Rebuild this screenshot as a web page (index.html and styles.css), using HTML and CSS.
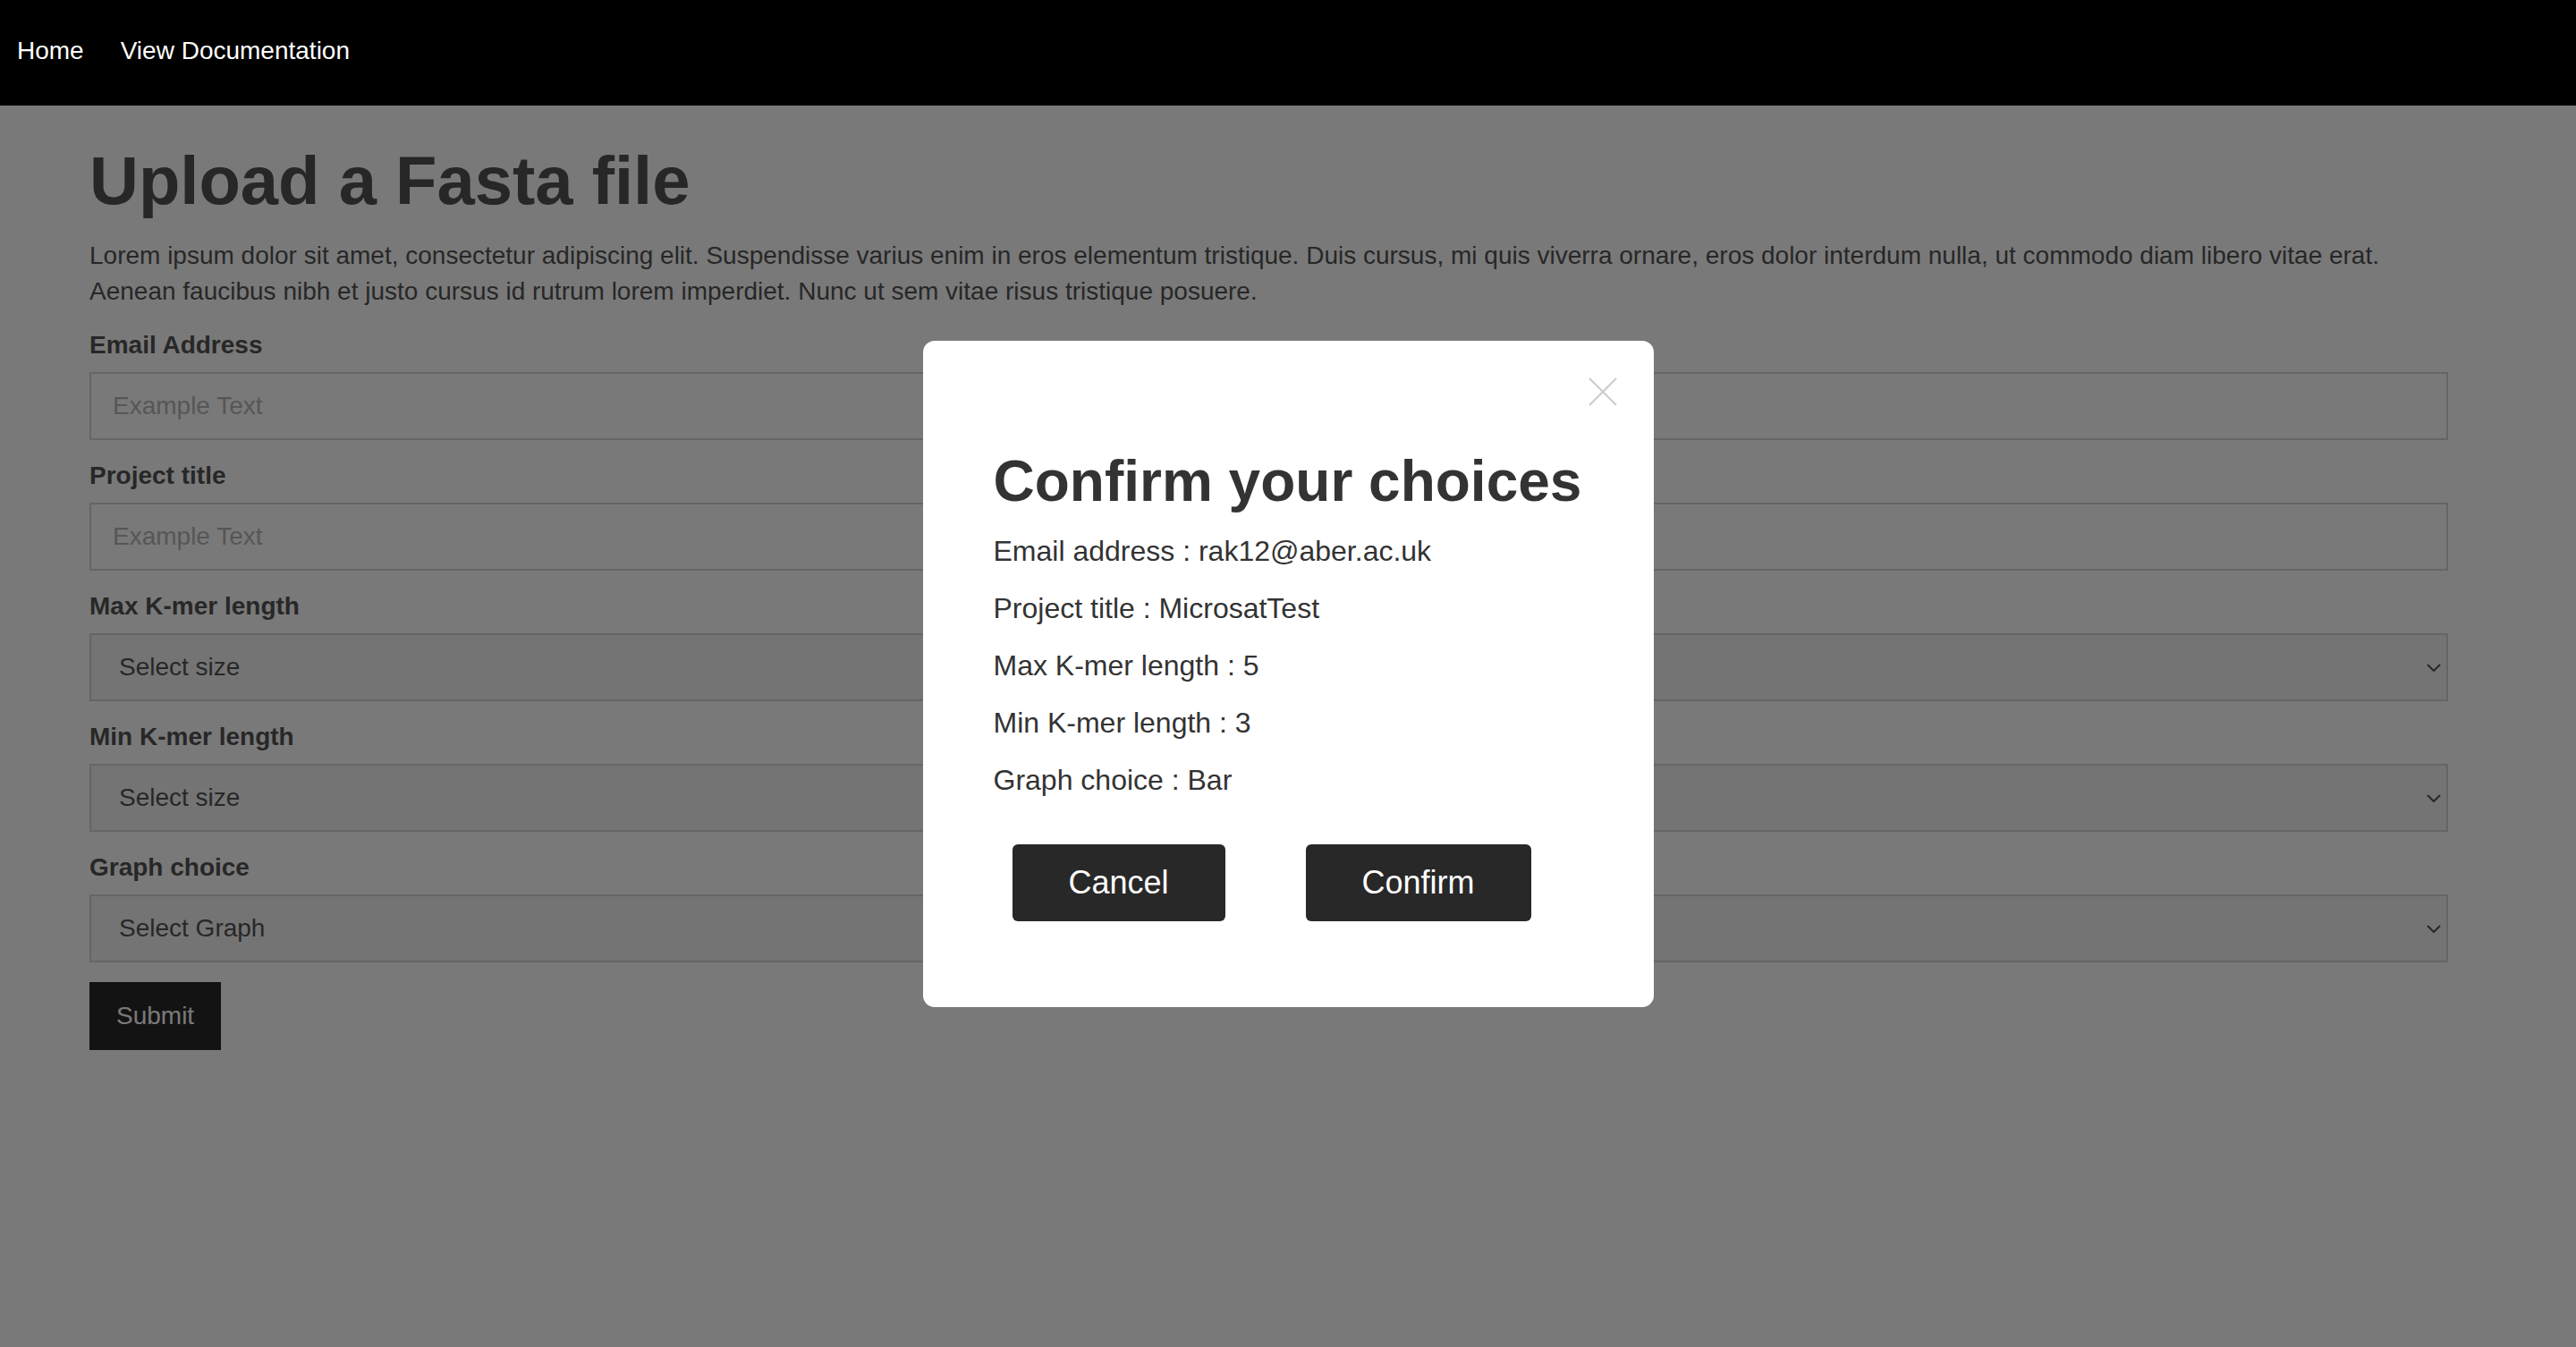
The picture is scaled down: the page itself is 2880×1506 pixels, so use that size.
FILE: index.html
```html
<!DOCTYPE html>
<html lang="en">
<head>
<meta charset="utf-8">
<title>Upload a Fasta file</title>
<link rel="stylesheet" href="styles.css">
</head>
<body>
<nav class="navbar">
  <a class="nav-link" href="#">Home</a>
  <a class="nav-link" href="#">View Documentation</a>
</nav>

<main class="page">
  <h1 class="page-title">Upload a Fasta file</h1>
  <p class="intro">Lorem ipsum dolor sit amet, consectetur adipiscing elit. Suspendisse varius enim in eros elementum tristique. Duis cursus, mi quis viverra ornare, eros dolor interdum nulla, ut commodo diam libero vitae erat. Aenean faucibus nibh et justo cursus id rutrum lorem imperdiet. Nunc ut sem vitae risus tristique posuere.</p>
  <form class="upload-form">
    <label class="field-label" for="email">Email Address</label>
    <input class="text-field" id="email" type="text" placeholder="Example Text">

    <label class="field-label" for="title">Project title</label>
    <input class="text-field" id="title" type="text" placeholder="Example Text">

    <label class="field-label" for="max">Max K-mer length</label>
    <div class="select-wrap">
      <select class="select-field" id="max"><option>Select size</option></select>
      <svg class="chevron" viewBox="0 0 16 9" width="16" height="9"><path d="M1 1 L8 8 L15 1" fill="none" stroke="#333" stroke-width="2"/></svg>
    </div>

    <label class="field-label" for="min">Min K-mer length</label>
    <div class="select-wrap">
      <select class="select-field" id="min"><option>Select size</option></select>
      <svg class="chevron" viewBox="0 0 16 9" width="16" height="9"><path d="M1 1 L8 8 L15 1" fill="none" stroke="#333" stroke-width="2"/></svg>
    </div>

    <label class="field-label" for="graph">Graph choice</label>
    <div class="select-wrap">
      <select class="select-field" id="graph"><option>Select Graph</option></select>
      <svg class="chevron" viewBox="0 0 16 9" width="16" height="9"><path d="M1 1 L8 8 L15 1" fill="none" stroke="#333" stroke-width="2"/></svg>
    </div>

    <button class="submit-button" type="button">Submit</button>
  </form>
</main>

<div class="overlay">
  <div class="modal">
    <button class="close-button" type="button" aria-label="Close">
      <svg viewBox="0 0 32 32" width="32" height="32"><path d="M1 1 L31 31 M31 1 L1 31" fill="none" stroke="#cccccc" stroke-width="2"/></svg>
    </button>
    <h2 class="modal-title">Confirm your choices</h2>
    <p class="modal-line">Email address : rak12@aber.ac.uk</p>
    <p class="modal-line">Project title : MicrosatTest</p>
    <p class="modal-line">Max K-mer length : 5</p>
    <p class="modal-line">Min K-mer length : 3</p>
    <p class="modal-line">Graph choice : Bar</p>
    <div class="modal-actions">
      <button class="modal-button" type="button">Cancel</button>
      <button class="modal-button" type="button">Confirm</button>
    </div>
  </div>
</div>
</body>
</html>
```

FILE: styles.css
```css
* { box-sizing: border-box; }

html, body { height: 100%; }

body {
  margin: 0;
  font-family: "Liberation Sans", Arial, Helvetica, sans-serif;
  font-size: 28px;
  line-height: 40px;
  color: #333333;
  background: #ffffff;
}

.navbar {
  position: relative;
  z-index: 2;
  display: flex;
  gap: 41px;
  height: 118px;
  padding: 37px 0 0 19px;
  background: #000000;
}

.nav-link {
  color: #ffffff;
  text-decoration: none;
  font-size: 28px;
  line-height: 40px;
}

.page {
  margin: 0 143px 0 100px;
}

.page-title {
  margin: 40px 0 20px;
  font-size: 76px;
  line-height: 88px;
  font-weight: 700;
}

.intro {
  margin: 0 0 20px;
}

.upload-form {
  display: flex;
  flex-direction: column;
  align-items: stretch;
}

.field-label {
  display: block;
  margin-bottom: 10px;
  font-weight: 700;
}

.text-field,
.select-field {
  display: block;
  width: 100%;
  height: 76px;
  margin: 0 0 20px;
  border: 2px solid #cccccc;
  border-radius: 0;
  font-family: inherit;
  font-size: 28px;
  line-height: 40px;
  color: #333333;
}

.text-field {
  padding: 16px 24px;
  background: #ffffff;
}

.text-field::placeholder {
  color: #a9a9a9;
}

.select-wrap {
  position: relative;
}

.select-field {
  appearance: none;
  -webkit-appearance: none;
  padding: 0 40px 0 31px;
  background: #f3f3f3;
}

.chevron {
  position: absolute;
  right: 8px;
  top: 34px;
  pointer-events: none;
}

.submit-button {
  align-self: flex-start;
  margin-top: 2px;
  padding: 18px 30px;
  border: 0;
  background: #000000;
  color: #ffffff;
  font-family: inherit;
  font-size: 28px;
  line-height: 40px;
}

.overlay {
  position: fixed;
  inset: 0;
  z-index: 1;
  display: flex;
  align-items: center;
  justify-content: center;
  background: rgba(32, 32, 32, 0.6);
}

.modal {
  position: relative;
  width: 817px;
  padding: 121px 79px 96px;
  background: #ffffff;
  border-radius: 13px;
  color: #333333;
}

.close-button {
  position: absolute;
  top: 41px;
  right: 41px;
  width: 32px;
  height: 32px;
  padding: 0;
  border: 0;
  background: transparent;
}

.close-button svg { display: block; }

.modal-title {
  margin: 0 0 20px;
  font-size: 64px;
  line-height: 72px;
  font-weight: 700;
}

.modal-line {
  margin: 0 0 20px;
  font-size: 32px;
  line-height: 44px;
}

.modal-actions {
  display: flex;
  gap: 90px;
  margin: 50px 0 0 21px;
}

.modal-button {
  padding: 22px 63px;
  border: 0;
  border-radius: 6px;
  background: #282828;
  color: #ffffff;
  font-family: inherit;
  font-size: 36px;
  line-height: 42px;
}
```
